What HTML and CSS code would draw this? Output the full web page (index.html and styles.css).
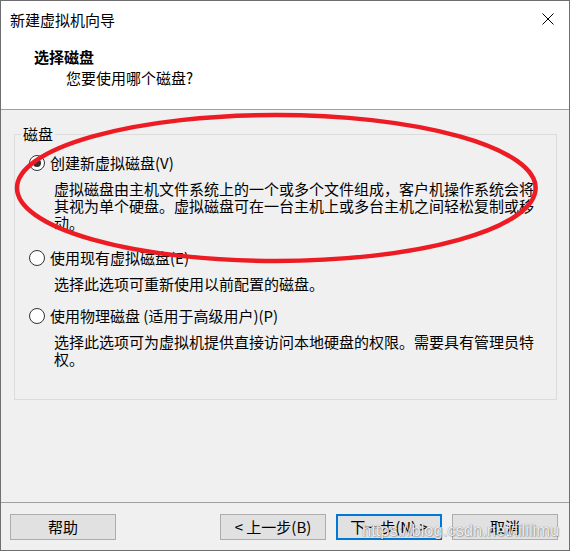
FILE: index.html
```html
<!DOCTYPE html>
<html lang="zh-CN">
<head>
<meta charset="utf-8">
<title>新建虚拟机向导</title>
<link rel="stylesheet" href="styles.css">
</head>
<body>
<div class="window">
  <div class="titlebar">
    <span class="title">新建虚拟机向导</span>
    <svg class="close" width="12" height="12" viewBox="0 0 12 12"><path d="M0.5 0.5 L11.5 11.5 M11.5 0.5 L0.5 11.5" stroke="#000" stroke-width="1" fill="none"/></svg>
  </div>
  <div class="header">
    <div class="heading">选择磁盘</div>
    <div class="subheading">您要使用哪个磁盘?</div>
  </div>
  <div class="content">
    <fieldset class="group">
      <legend class="group-label">磁盘</legend>
      <div class="option">
        <div class="option-row"><span class="radio radio-checked"></span><span class="option-label">创建新虚拟磁盘(V)</span></div>
        <p class="option-desc">虚拟磁盘由主机文件系统上的一个或多个文件组成，客户机操作系统会将其视为单个硬盘。虚拟磁盘可在一台主机上或多台主机之间轻松复制或移动。</p>
      </div>
      <div class="option option-second">
        <div class="option-row"><span class="radio"></span><span class="option-label">使用现有虚拟磁盘(E)</span></div>
        <p class="option-desc">选择此选项可重新使用以前配置的磁盘。</p>
      </div>
      <div class="option option-third">
        <div class="option-row"><span class="radio"></span><span class="option-label">使用物理磁盘 (适用于高级用户)(P)</span></div>
        <p class="option-desc">选择此选项可为虚拟机提供直接访问本地硬盘的权限。需要具有管理员特权。</p>
      </div>
    </fieldset>
  </div>
  <div class="footer">
    <button class="btn">帮助</button>
    <div class="nav">
      <button class="btn">&lt; 上一步(B)</button>
      <button class="btn btn-default">下一步(N) &gt;</button>
      <button class="btn">取消</button>
    </div>
  </div>
  <div class="watermark">https://blog.csdn.net/lililimu</div>
  <svg class="markup" width="570" height="551" viewBox="0 0 570 551">
    <ellipse cx="276.3" cy="188" rx="259.3" ry="73" fill="none" stroke="#ed1c24" stroke-width="4.5"/>
  </svg>
</div>
</body>
</html>
```
FILE: styles.css
```css
html, body {
  margin: 0;
  padding: 0;
  background: #f0f0f0;
}

.window {
  position: relative;
  box-sizing: border-box;
  width: 570px;
  height: 551px;
  border: 1px solid #6f6f6f;
  background: #f0f0f0;
  display: flex;
  flex-direction: column;
  overflow: hidden;
  font-family: "Noto Sans CJK SC", "Noto Sans", sans-serif;
  font-size: 15px;
  color: #000;
}

.titlebar {
  height: 38px;
  background: #fff;
  display: flex;
  align-items: center;
  flex: none;
}

.title {
  padding-left: 9px;
  line-height: 20px;
}

.close {
  margin-left: auto;
  margin-right: 15px;
  align-self: flex-start;
  margin-top: 12px;
}

.header {
  flex: none;
  background: #fff;
  box-sizing: border-box;
  height: 71px;
  padding-top: 8px;
  border-bottom: 1px solid #a0a0a0;
}

.heading {
  padding-left: 33px;
  line-height: 20px;
  font-weight: bold;
}

.subheading {
  padding-left: 65px;
  margin-top: 1px;
  line-height: 20px;
}

.content {
  flex: 1;
  padding: 14px 12px 0 13px;
}

.group {
  margin: 0;
  min-width: 0;
  border: 1px solid #dcdcdc;
  padding: 9px 12px 32px 6px;
}

.group-label {
  padding: 0 2px;
  line-height: 20px;
}

.option-row {
  display: flex;
  align-items: center;
  height: 20px;
  padding-left: 8px;
}

.radio {
  box-sizing: border-box;
  width: 16px;
  height: 16px;
  border: 1px solid #333;
  border-radius: 50%;
  background: #fff;
  display: flex;
  align-items: center;
  justify-content: center;
  flex: none;
}

.radio-checked::after {
  content: "";
  width: 8px;
  height: 8px;
  border-radius: 50%;
  background: #333;
}

.option-label {
  margin-left: 5px;
  line-height: 20px;
}

.option-desc {
  margin: 7px 0 0 0;
  padding-left: 33px;
  line-height: 17px;
}

.option-second {
  margin-top: 17px;
}

.option-third {
  margin-top: 14px;
}

.footer {
  flex: none;
  height: 48px;
  box-sizing: border-box;
  border-top: 1px solid #a0a0a0;
  padding: 11px 11px 10px 9px;
  display: flex;
  align-items: flex-start;
}

.nav {
  margin-left: auto;
  display: flex;
  gap: 10px;
}

.btn {
  box-sizing: border-box;
  width: 106px;
  height: 26px;
  margin: 0;
  padding: 0;
  border: 1px solid #adadad;
  background: #e1e1e1;
  font-family: "Noto Sans CJK SC", "Noto Sans", sans-serif;
  font-size: 15px;
  line-height: 20px;
  color: #000;
}

.btn-default {
  border: 2px solid #0078d7;
}

.watermark {
  position: absolute;
  left: 361px;
  top: 520px;
  font-family: "Liberation Sans", Arial, sans-serif;
  font-size: 16.5px;
  line-height: 19px;
  color: rgba(255, 255, 255, 0.9);
  text-shadow: 0 0 1px rgba(0, 0, 0, 0.55), 1px 1px 1px rgba(0, 0, 0, 0.2);
  white-space: nowrap;
}

.markup {
  position: absolute;
  left: -1px;
  top: -1px;
  pointer-events: none;
}
```
